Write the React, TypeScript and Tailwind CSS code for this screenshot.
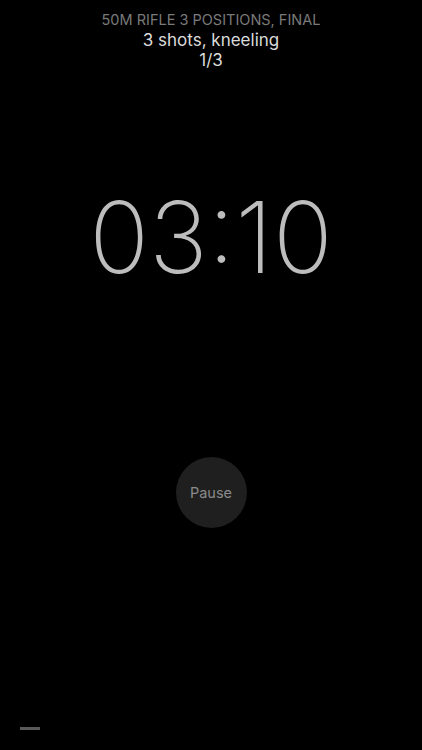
import React from "react";

export default function App() {
  return (
    <div className="w-[422px] h-[750px] bg-black flex flex-col items-center relative overflow-hidden font-['Inter',sans-serif]">
      {/* header */}
      <div className="flex flex-col items-center pt-[10px]">
        <span className="text-[14.5px] leading-[19px] text-[#7a7a7a] uppercase">
          50m Rifle 3 Positions, Final
        </span>
        <span className="text-[17px] leading-[20px] mt-[1px] text-[#dcdcdc]">3 shots, kneeling</span>
        <span className="text-[17px] leading-[20px] text-[#dcdcdc]">1/3</span>
      </div>

      {/* timer */}
      <div className="mt-[117px] text-[99px] leading-[100px] font-extralight text-[#bdbdbd]">
        03:10
      </div>

      {/* pause button */}
      <button
        type="button"
        className="mt-[170px] w-[71px] h-[71px] rounded-full bg-[#1f1f1f] flex items-center justify-center text-[14.5px] text-[#8a8a8a]"
      >
        Pause
      </button>

      {/* bottom dash */}
      <div className="absolute left-[20px] top-[727px] w-[20px] h-[3px] bg-[#5a5a5a]" />
    </div>
  );
}
